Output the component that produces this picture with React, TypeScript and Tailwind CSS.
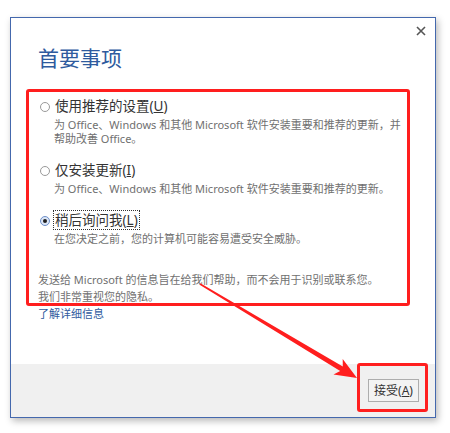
import React from 'react';

const font = "font-['Noto_Sans','Noto_Sans_CJK_SC',sans-serif]";

function Radio({ checked }: { checked?: boolean }) {
  return (
    <span
      className={
        'mt-[5px] flex h-[10px] w-[10px] shrink-0 items-center justify-center rounded-full border ' +
        (checked ? 'border-[#6d8fc9] bg-[#dbe6f6]' : 'border-[#9a9a9a] bg-white')
      }
    >
      {checked && <span className="h-[4px] w-[4px] rounded-full bg-[#1f1f1f]" />}
    </span>
  );
}

function Option({
  label,
  hotkey,
  lines,
  checked,
  className,
}: {
  label: string;
  hotkey: string;
  lines: string[];
  checked?: boolean;
  className?: string;
}) {
  return (
    <div className={'flex gap-[4px] ' + (className ?? '')}>
      <Radio checked={checked} />
      <div className="flex flex-col">
        <span
          className={
            'self-start px-[1px] text-[13.5px] leading-[18px] text-[#333] ' +
            (checked ? 'outline outline-1 outline-dotted outline-[#333]' : '')
          }
        >
          {label}(<span className="underline">{hotkey}</span>)
        </span>
        <div className="mt-[3px] text-[11px] leading-[14px] text-[#707070]">
          {lines.map((l) => (
            <div key={l}>{l}</div>
          ))}
        </div>
      </div>
    </div>
  );
}

export default function App() {
  return (
    <div className={`relative h-[433px] w-[450px] overflow-hidden bg-white ${font}`}>
      <div className="ml-[10px] mt-[17px] flex h-[401px] w-[426px] flex-col border border-[#4468ad] bg-white shadow-[2px_3px_7px_rgba(0,0,0,0.28)]">
        <div className="flex items-start justify-between">
          <h1 className="ml-[27px] mt-[25px] text-[21px] leading-[30px] font-normal text-[#2f5b9e]">首要事项</h1>
          <button className="mr-[8px] mt-[7px] flex h-[12px] w-[12px] items-center justify-center text-[#555]">
            <svg width="10" height="10" viewBox="0 0 10 10">
              <path d="M1 1 L9 9 M9 1 L1 9" stroke="#555" strokeWidth="1.6" />
            </svg>
          </button>
        </div>

        <div className="ml-[29px] mt-[24px] flex flex-col">
          <Option
            label="使用推荐的设置"
            hotkey="U"
            lines={['为 Office、Windows 和其他 Microsoft 软件安装重要和推荐的更新，并', '帮助改善 Office。']}
          />
          <Option
            className="mt-[15px]"
            label="仅安装更新"
            hotkey="I"
            lines={['为 Office、Windows 和其他 Microsoft 软件安装重要和推荐的更新。']}
          />
          <Option
            className="mt-[15px]"
            checked
            label="稍后询问我"
            hotkey="L"
            lines={['在您决定之前，您的计算机可能容易遭受安全威胁。']}
          />
        </div>

        <div className="ml-[27px] mt-[25px] text-[11px] leading-[17px] text-[#707070]">
          <div>发送给 Microsoft 的信息旨在给我们帮助，而不会用于识别或联系您。</div>
          <div>我们非常重视您的隐私。</div>
          <a className="block text-[#2f5b9e]">了解详细信息</a>
        </div>

        <div className="mt-auto flex h-[53px] items-center justify-end bg-[#f0f0f0] pr-[16px]">
          <button className="h-[23px] w-[51px] border border-[#adadad] bg-[#f3f3f3] text-[12px] leading-[20px] text-[#333]">
            接受(<span className="underline">A</span>)
          </button>
        </div>
      </div>

      {/* annotations */}
      <div className="pointer-events-none absolute left-[26px] top-[89px] h-[217px] w-[384px] rounded-[3px] border-[3px] border-[#ff1e1e]" />
      <div className="pointer-events-none absolute left-[357px] top-[363px] h-[49px] w-[71px] rounded-[3px] border-[3px] border-[#ff1e1e]" />
      <svg className="pointer-events-none absolute left-0 top-0" width="450" height="433">
        <polygon
          points="200.4,283.3 199.6,284.7 340.2,371.0 333.5,374.5 357,378 342.7,359.1 342.8,366.6"
          fill="#ff1e1e"
        />
      </svg>
    </div>
  );
}
